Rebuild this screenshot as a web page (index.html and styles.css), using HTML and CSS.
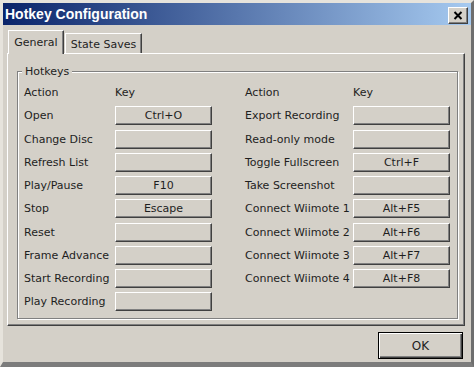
FILE: index.html
```html
<!DOCTYPE html>
<html lang="en">
<head>
    <meta charset="UTF-8">
    <title>Hotkey Configuration</title>
    <link rel="stylesheet" href="styles.css">
</head>
<body>
    <div class="window">
        <div class="titlebar">
            <span class="title">Hotkey Configuration</span>
            <button class="close">
                <svg width="10" height="9" viewBox="0 0 10 9">
                    <path d="M1.5 1 L8.5 8 M8.5 1 L1.5 8" stroke="#000" stroke-width="2" fill="none"/>
                </svg>
            </button>
        </div>
        <div class="tabs">
            <div class="tab active">General</div>
            <div class="tab">State Saves</div>
        </div>
        <div class="panel">
            <fieldset class="group">
                <legend>Hotkeys</legend>
                <div class="columns">
                    <div class="col col-left">
                        <span class="head">Action</span><span class="head">Key</span>
                        <span class="label">Open</span><button class="key">Ctrl+O</button>
                        <span class="label">Change Disc</span><button class="key"></button>
                        <span class="label">Refresh List</span><button class="key"></button>
                        <span class="label">Play/Pause</span><button class="key">F10</button>
                        <span class="label">Stop</span><button class="key">Escape</button>
                        <span class="label">Reset</span><button class="key"></button>
                        <span class="label">Frame Advance</span><button class="key"></button>
                        <span class="label">Start Recording</span><button class="key"></button>
                        <span class="label">Play Recording</span><button class="key"></button>
                    </div>
                    <div class="col col-right">
                        <span class="head">Action</span><span class="head">Key</span>
                        <span class="label">Export Recording</span><button class="key"></button>
                        <span class="label">Read-only mode</span><button class="key"></button>
                        <span class="label">Toggle Fullscreen</span><button class="key">Ctrl+F</button>
                        <span class="label">Take Screenshot</span><button class="key"></button>
                        <span class="label">Connect Wiimote 1</span><button class="key">Alt+F5</button>
                        <span class="label">Connect Wiimote 2</span><button class="key">Alt+F6</button>
                        <span class="label">Connect Wiimote 3</span><button class="key">Alt+F7</button>
                        <span class="label">Connect Wiimote 4</span><button class="key">Alt+F8</button>
                    </div>
                </div>
            </fieldset>
        </div>
        <div class="footer">
            <button class="ok">OK</button>
        </div>
    </div>
</body>
</html>
```

FILE: styles.css
```css
body {
    margin: 0;
    background-color: #d4d0c8;
    font-family: "DejaVu Sans", Tahoma, sans-serif;
    font-size: 11px;
    color: #1e1e1e;
}
.window {
    width: 474px;
    height: 367px;
    box-sizing: border-box;
    border-style: solid;
    border-width: 3px 3px 5px 3px;
    border-color: #e6e3dc #6e6e6e #7c7c7c #e6e3dc;
    background-color: #d4d0c8;
    display: flex;
    flex-direction: column;
}
.titlebar {
    height: 22px;
    display: flex;
    align-items: center;
    justify-content: space-between;
    background: linear-gradient(to right, #0a246a, #a6caf0);
}
.title {
    color: white;
    font-family: "Liberation Sans", Arial, sans-serif;
    font-weight: bold;
    font-size: 14px;
    padding-left: 2px;
}
.close {
    width: 20px;
    height: 17px;
    margin-right: 3px;
    margin-top: 3px;
    padding: 0;
    display: flex;
    align-items: center;
    justify-content: center;
    background-color: #d4d0c8;
    border: 1px solid;
    border-color: #fff #404040 #404040 #fff;
    box-shadow: inset -1px -1px 0 #808080;
}
.tabs {
    display: flex;
    align-items: flex-end;
    height: 23px;
    margin-top: 5px;
    padding-left: 5px;
}
.tab {
    box-sizing: border-box;
    height: 20px;
    width: 77px;
    display: flex;
    align-items: center;
    justify-content: center;
    border: 1px solid;
    border-bottom: none;
    border-color: #fff #404040 #404040 #fff;
    box-shadow: inset -1px 0 0 #808080;
    padding-top: 1px;
    margin-left: 1px;
}
.tab.active {
    width: 56px;
    height: 24px;
    margin-left: 0;
    margin-bottom: -1px;
    padding-top: 0;
    padding-bottom: 1px;
    background-color: #d4d0c8;
    position: relative;
    z-index: 1;
}
.panel {
    height: 273px;
    box-sizing: border-box;
    margin: 0 6px 0 4px;
    border: 1px solid;
    border-color: #fff #404040 #404040 #fff;
    box-shadow: inset -1px -1px 0 #808080;
    padding: 11px 6px 0 9px;
}
.group {
    margin: 0;
    padding: 5px 5px 6px 6px;
    border: 1px solid #808080;
    box-shadow: inset 1px 1px 0 #fff, 1px 1px 0 #fff;
}
.group legend {
    padding: 0 3px;
    margin-left: -2px;
    background-color: #d4d0c8;
    line-height: 13px;
}
.columns {
    display: flex;
    gap: 33px;
}
.col {
    display: grid;
    grid-auto-rows: 19.25px;
    row-gap: 4px;
    align-items: center;
    align-content: start;
}
.col-left {
    grid-template-columns: 91px 97px;
}
.col-right {
    grid-template-columns: 108px 97px;
}
.label, .head {
    white-space: nowrap;
}
.key {
    height: 19px;
    box-sizing: border-box;
    padding: 0;
    font-family: inherit;
    font-size: 11px;
    color: #1e1e1e;
    background-color: #d4d0c8;
    border: 1px solid;
    border-color: #fff #404040 #404040 #fff;
    box-shadow: inset -1px -1px 0 #808080;
}
.footer {
    display: flex;
    justify-content: flex-end;
    padding: 6px 8px 0 0;
}
.ok {
    width: 85px;
    height: 27px;
    padding: 0;
    font-family: inherit;
    font-size: 12px;
    color: #1e1e1e;
    background-color: #d4d0c8;
    border: 1px solid #000;
    box-shadow: inset 1px 1px 0 #fff, inset -1px -1px 0 #404040, inset -2px -2px 0 #808080;
}
```
